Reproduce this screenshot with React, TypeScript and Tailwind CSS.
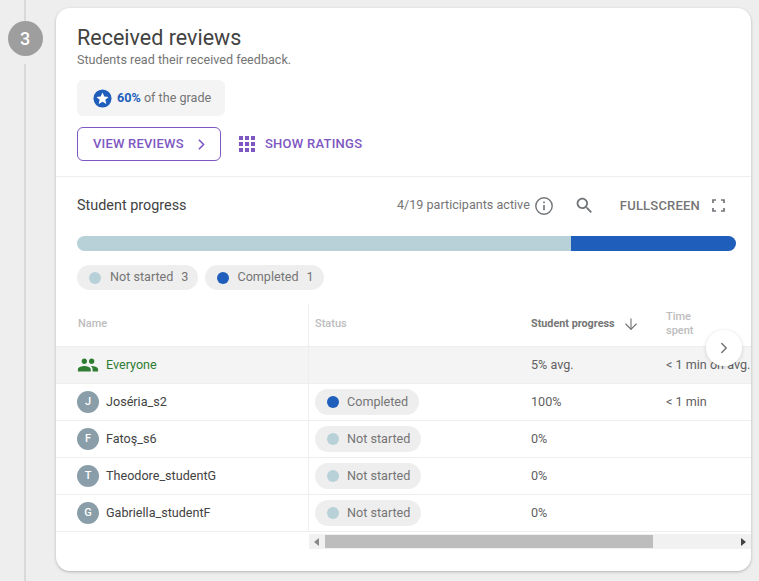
import { ChevronRight, ArrowDown } from 'lucide-react';

type Student = { name: string; status: 'Completed' | 'Not started'; progress: string; time?: string };

const students: Student[] = [
  { name: 'Joséria_s2', status: 'Completed', progress: '100%', time: '< 1 min' },
  { name: 'Fatoş_s6', status: 'Not started', progress: '0%' },
  { name: 'Theodore_studentG', status: 'Not started', progress: '0%' },
  { name: 'Gabriella_studentF', status: 'Not started', progress: '0%' },
];

const Dot = ({ done }: { done: boolean }) => (
  <span className={`h-3 w-3 shrink-0 rounded-full ${done ? 'bg-[#1f5fbb]' : 'bg-[#b8d1d8]'}`} />
);

const GroupIcon = () => (
  <svg width="22" height="22" viewBox="0 0 24 24" fill="#2e7d32">
    <path d="M16 11c1.66 0 2.99-1.34 2.99-3S17.66 5 16 5c-1.66 0-3 1.34-3 3s1.34 3 3 3zm-8 0c1.66 0 2.99-1.34 2.99-3S9.66 5 8 5C6.34 5 5 6.34 5 8s1.34 3 3 3zm0 2c-2.33 0-7 1.17-7 3.5V19h14v-2.5c0-2.33-4.67-3.5-7-3.5zm8 0c-.29 0-.62.02-.97.05 1.16.84 1.97 1.97 1.97 3.45V19h6v-2.5c0-2.33-4.67-3.5-7-3.5z" />
  </svg>
);

const StarBadge = () => (
  <svg width="19" height="19" viewBox="0 0 20 20">
    <circle cx="10" cy="10" r="9.5" fill="#1f5fbb" />
    <path d="M10 3.6l1.9 4.2 4.5.5-3.4 3 1 4.5-4-2.3-4 2.3 1-4.5-3.4-3 4.5-.5z" fill="#fff" />
  </svg>
);

const InfoIcon = () => (
  <svg width="20" height="20" viewBox="0 0 20 20" fill="none" stroke="#6f7377" strokeWidth="1.4">
    <circle cx="10" cy="10" r="8.2" />
    <path d="M10 9v5.2" strokeWidth="1.6" />
    <path d="M10 5.6v1.6" strokeWidth="1.6" />
  </svg>
);

const SearchIcon = () => (
  <svg width="21" height="21" viewBox="0 0 24 24" fill="#6f7377">
    <path d="M15.5 14h-.79l-.28-.27C15.41 12.59 16 11.11 16 9.5 16 5.91 13.09 3 9.5 3S3 5.91 3 9.5 5.91 16 9.5 16c1.61 0 3.09-.59 4.23-1.57l.27.28v.79l5 4.99L20.49 19l-4.99-5zm-6 0C7.01 14 5 11.99 5 9.5S7.01 5 9.5 5 14 7.01 14 9.5 11.99 14 9.5 14z" />
  </svg>
);

const FullscreenIcon = () => (
  <svg width="13" height="13" viewBox="0 0 13 13" fill="none" stroke="#6f7377" strokeWidth="1.7">
    <path d="M1 4V1h3M9 1h3v3M12 9v3H9M4 12H1V9" />
  </svg>
);

const GridIcon = () => (
  <div className="grid w-[16px] grid-cols-3 gap-[2px]">
    {Array.from({ length: 9 }).map((_, i) => (
      <span key={i} className="h-1 w-1 bg-[#7e57c2]" />
    ))}
  </div>
);

const StatusPill = ({ status }: { status: Student['status'] }) => (
  <div className="inline-flex h-[26px] items-center gap-[8px] rounded-full bg-[#eeeeee] pl-3 pr-[11px] text-[12.6px] text-[#757575]">
    <Dot done={status === 'Completed'} />
    {status}
  </div>
);

export default function App() {
  return (
    <div className="flex h-[581px] w-[759px] overflow-hidden bg-[#eeeeee] font-['Roboto',sans-serif]">
      {/* stepper */}
      <div className="flex w-[56px] shrink-0 flex-col items-center pr-[6px]">
        <div className="h-[21px] w-[2px] bg-[#d9d9d9]" />
        <div className="flex h-[35px] w-[35px] shrink-0 items-center justify-center rounded-full bg-[#9e9e9e] text-[18px] font-medium text-white">
          3
        </div>
        <div className="mt-2 w-[2px] flex-1 bg-[#d9d9d9]" />
      </div>

      {/* card */}
      <div className="mt-2 h-[563px] w-[695px] shrink-0 overflow-hidden rounded-[14px] bg-white shadow-[0_1px_3px_rgba(0,0,0,0.25)]">
        <div className="h-[169px] border-b border-[#eeeeee] pl-[21px] pt-[16px]">
          <h2 className="text-[21.5px] leading-[28px] text-[#424242]">Received reviews</h2>
          <p className="text-[12.6px] leading-[15px] text-[#757575]">Students read their received feedback.</p>
          <div className="mt-[13px] flex h-9 w-[148px] items-center gap-[5px] rounded-[6px] bg-[#f4f4f4] pl-4 text-[12.6px] text-[#757575]">
            <StarBadge />
            <span>
              <span className="font-bold text-[#1f5fbb]">60%</span> of the grade
            </span>
          </div>
          <div className="mt-[11px] flex items-center">
            <button className="flex h-[34px] w-[144px] items-center rounded-[6px] border border-[#7e57c2] pl-[15px] text-[13px] font-medium tracking-[0.2px] text-[#7e57c2]">
              VIEW REVIEWS
              <ChevronRight size={17} strokeWidth={2.4} className="ml-[9px]" />
            </button>
            <div className="ml-[18px] flex items-center gap-[10px] text-[13px] font-medium tracking-[0.25px] text-[#7e57c2]">
              <GridIcon />
              SHOW RATINGS
            </div>
          </div>
        </div>

        <div className="relative">
          <div className="flex h-[58px] items-center pb-[1px] pl-[21px] pr-[26px]">
            <span className="text-[14.4px] text-[#424242]">Student progress</span>
            <div className="ml-auto flex items-center text-[12.6px] text-[#757575]">
              <span>4/19 participants active</span>
              <span className="ml-[4px]"><InfoIcon /></span>
              <span className="ml-[20px]"><SearchIcon /></span>
              <span className="ml-[25px] text-[13px] font-medium tracking-[0.2px] text-[#757575]">FULLSCREEN</span>
              <span className="ml-[12px]"><FullscreenIcon /></span>
            </div>
          </div>

          <div className="ml-[21px] mt-[1px] flex h-[15px] w-[659px] overflow-hidden rounded-full">
            <div className="w-[75%] bg-[#b8d1d8]" />
            <div className="w-[25%] bg-[#1f5fbb]" />
          </div>

          <div className="ml-[21px] mt-[14px] flex gap-[7px] text-[12.6px] text-[#757575]">
            <div className="flex h-[25px] items-center gap-[9px] rounded-full bg-[#eeeeee] pl-3 pr-[10px]">
              <Dot done={false} />
              <span>Not started</span>
              <span className="ml-[-1px]">3</span>
            </div>
            <div className="flex h-[25px] items-center gap-[8px] rounded-full bg-[#eeeeee] pl-3 pr-[10px]">
              <Dot done />
              <span>Completed</span>
              <span>1</span>
            </div>
          </div>

          <div className="mt-[14px] text-[12.6px] text-[#616161]">
            <div className="grid h-[43px] grid-cols-[253px_216px_135px_91px] border-b border-[#eeeeee] pb-[2px] text-[11px] text-[#bdbdbd]">
              <div className="mb-[-2px] flex items-center border-r border-[#eeeeee] pb-[2px] pl-[22px] font-medium">Name</div>
              <div className="flex items-center pl-[6px] font-medium">Status</div>
              <div className="flex items-center pl-[6px] text-[10.8px] font-bold text-[#757575]">
                Student progress
                <ArrowDown size={18} strokeWidth={1.5} className="ml-[7px]" />
              </div>
              <div className="flex items-center pl-[6px] font-medium leading-[14px]">
                Time
                <br />
                spent
              </div>
            </div>

            <div className="grid h-[37px] grid-cols-[253px_216px_135px_91px] items-stretch border-b border-[#eeeeee] bg-[#f4f4f4]">
              <div className="flex items-center gap-[7px] border-r border-[#eeeeee] pl-[21px] text-[#2e7d32]">
                <GroupIcon />
                Everyone
              </div>
              <div />
              <div className="flex items-center pl-[6px]">5% avg.</div>
              <div className="flex items-center whitespace-nowrap pl-[6px]">&lt; 1 min on avg.</div>
            </div>

            {students.map((s) => (
              <div key={s.name} className="grid h-[37px] grid-cols-[253px_216px_135px_91px] items-stretch border-b border-[#eeeeee]">
                <div className="flex items-center gap-[7px] border-r border-[#eeeeee] pl-[21px] text-[#424242]">
                  <span className="flex h-[22px] w-[22px] items-center justify-center rounded-full bg-[#8a9ea9] text-[11px] font-medium text-white">
                    {s.name[0]}
                  </span>
                  {s.name}
                </div>
                <div className="flex items-center pl-[6px]">
                  <StatusPill status={s.status} />
                </div>
                <div className="flex items-center pl-[6px]">{s.progress}</div>
                <div className="flex items-center pl-[6px]">{s.time}</div>
              </div>
            ))}

            <div className="ml-[253px] mt-[2px] flex h-[15px] items-center bg-[#f1f1f1]">
              <span className="ml-[5px] h-0 w-0 border-y-[4px] border-r-[5px] border-y-transparent border-r-[#8a8a8a]" />
              <div className="ml-[6px] h-[13px] w-[328px] bg-[#bdbdbd]" />
              <span className="ml-auto mr-[5px] h-0 w-0 border-y-[4px] border-l-[5px] border-y-transparent border-l-[#424242]" />
            </div>
          </div>

          <button className="absolute left-[650px] top-[153px] flex h-9 w-9 items-center justify-center rounded-full bg-white text-[#757575] shadow-[0_1px_4px_rgba(0,0,0,0.15)]">
            <ChevronRight size={18} strokeWidth={2} />
          </button>
        </div>
      </div>
    </div>
  );
}
